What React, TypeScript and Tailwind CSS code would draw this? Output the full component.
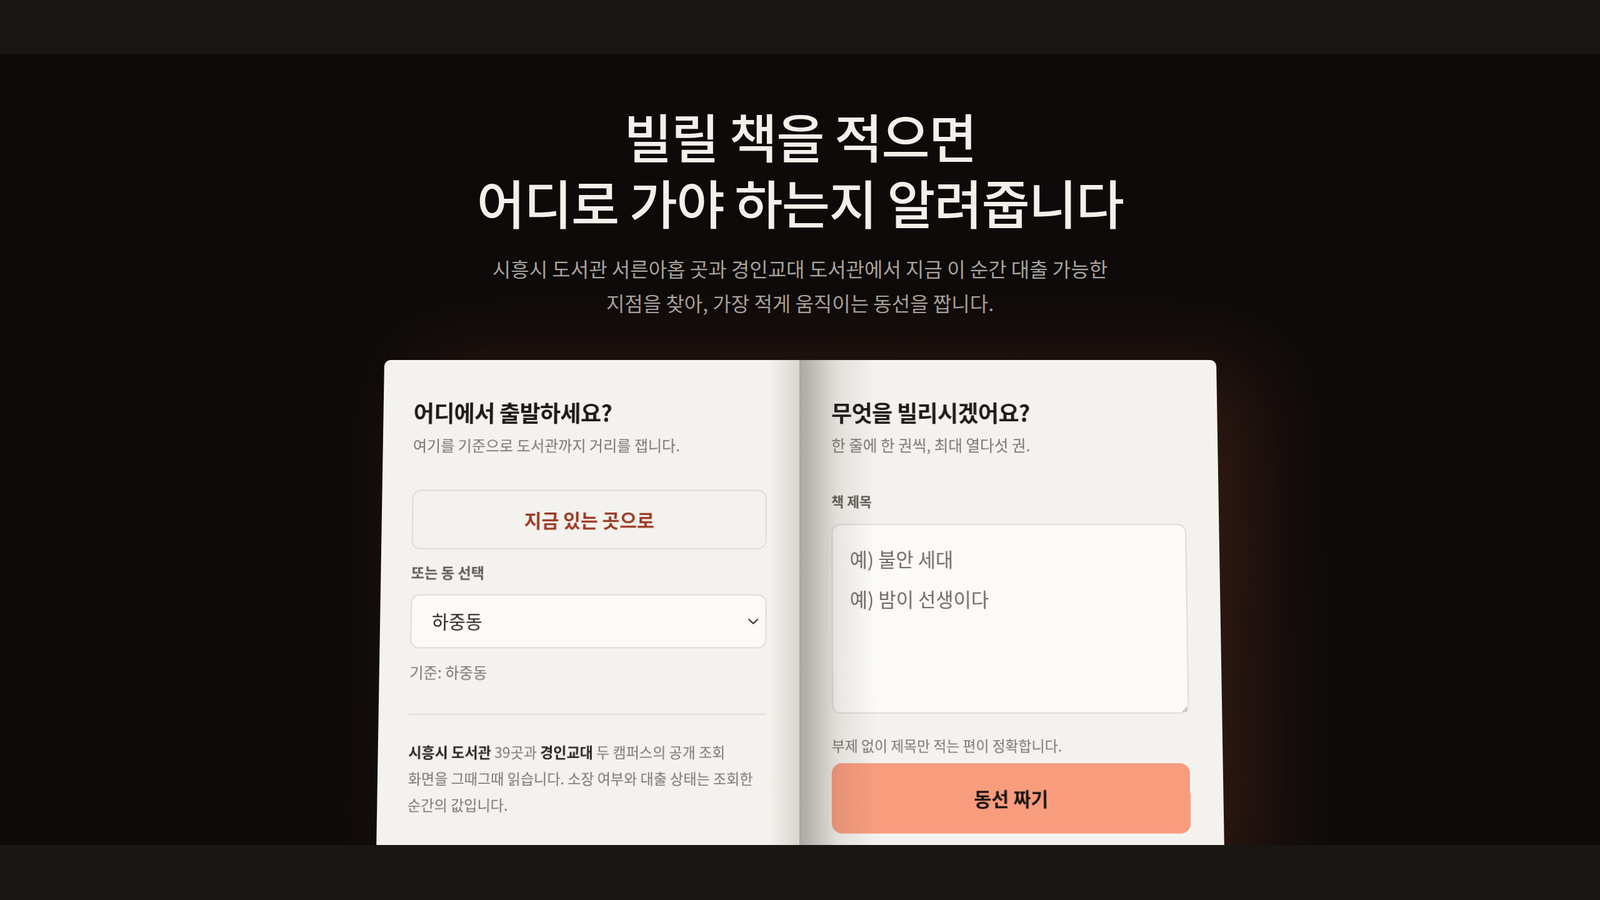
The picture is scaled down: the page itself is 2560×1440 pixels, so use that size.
import { useState } from "react"

const fontStack = '"Noto Sans CJK KR", "Noto Sans", sans-serif'

function ChevronDown() {
  return (
    <svg width="18" height="10" viewBox="0 0 18 10" fill="none" className="pointer-events-none absolute right-[12px] top-1/2 -translate-y-1/2">
      <path d="M2 1.5 L9 8 L16 1.5" stroke="#2a2522" strokeWidth="2" strokeLinecap="round" strokeLinejoin="round" />
    </svg>
  )
}

function LeftPage() {
  const [dong, setDong] = useState("하중동")

  return (
    <div className="relative flex-1 rounded-l-[10px] bg-[#f4f2ee] pl-[48px] pr-[52px] pt-[58px]">
      {/* 책등 쪽 그림자 */}
      <div className="pointer-events-none absolute right-0 top-0 h-full w-[48px] bg-gradient-to-r from-transparent to-[#d9d5cf]" />

      <h2 className="text-[36px] font-bold leading-[50px] tracking-[-0.02em] text-[#1f1a17]">어디에서 출발하세요?</h2>
      <p className="mt-[12px] text-[24px] leading-[32px] text-[#7a7570]">여기를 기준으로 도서관까지 거리를 잽니다.</p>

      <button
        type="button"
        className="mt-[55px] flex h-[94px] w-full items-center justify-center rounded-[14px] border-2 border-[#e0dcd7] bg-[#f4f2ee] text-[30px] font-bold text-[#9b3a24]"
      >
        지금 있는 곳으로
      </button>

      <label className="mt-[21px] block text-[23px] font-bold leading-[30px] text-[#5f5a55]">또는 동 선택</label>
      <div className="relative mt-[20px]">
        <select
          value={dong}
          onChange={e => setDong(e.target.value)}
          className="block h-[85px] w-full appearance-none rounded-[14px] border-2 border-[#e0dcd7] bg-[#fbfaf8] pl-[32px] text-[29px] text-[#2a2522] outline-none"
        >
          <option>하중동</option>
          <option>정왕동</option>
          <option>은행동</option>
          <option>대야동</option>
        </select>
        <ChevronDown />
      </div>
      <p className="mt-[21px] text-[24px] leading-[32px] text-[#7a7570]">기준: {dong}</p>

      <div className="mt-[49px] h-[2px] w-full bg-[#e0dcd7]" />

      <p className="mt-[37px] text-[22.7px] leading-[41px] text-[#7a7570]">
        <b className="font-bold text-[#2a2522]">시흥시 도서관</b> 39곳과 <b className="font-bold text-[#2a2522]">경인교대</b> 두 캠퍼스의 공개 조회
        <br />
        화면을 그때그때 읽습니다. 소장 여부와 대출 상태는 조회한
        <br />
        순간의 값입니다.
      </p>
      <div className="h-[80px]" />
    </div>
  )
}

function RightPage() {
  return (
    <div className="relative flex-1 rounded-r-[10px] bg-[#f4f2ee] pl-[51px] pr-[52px] pt-[58px]">
      <h2 className="text-[36px] font-bold leading-[50px] tracking-[-0.02em] text-[#1f1a17]">무엇을 빌리시겠어요?</h2>
      <p className="mt-[12px] text-[24.5px] leading-[32px] text-[#7a7570]">한 줄에 한 권씩, 최대 열다섯 권.</p>

      <label className="mt-[58px] block text-[21.5px] font-bold leading-[30px] text-[#5f5a55]">책 제목</label>
      <textarea
        placeholder={"예) 불안 세대\n예) 밤이 선생이다"}
        className="mt-[21px] block h-[298px] w-full rounded-[14px] border-2 border-[#e0dcd7] bg-[#fbfaf8] px-[27px] pt-[22px] text-[30.5px] leading-[63px] text-[#2a2522] outline-none placeholder:text-[#6e6964]"
      />
      <p className="mt-[34px] text-[22.5px] leading-[30px] text-[#7a7570]">부제 없이 제목만 적는 편이 정확합니다.</p>

      <button
        type="button"
        className="mt-[13px] flex h-[109px] w-full items-center justify-center rounded-[16px] bg-[#f89c7e] text-[30px] font-bold text-[#1a1411]"
      >
        동선 짜기
      </button>
      <div className="h-[80px]" />

      {/* 책등 쪽 그림자 */}
      <div className="pointer-events-none absolute left-0 top-0 h-full w-[120px] bg-gradient-to-r from-[rgba(70,62,55,0.42)] via-[rgba(70,62,55,0.1)] to-transparent" />
    </div>
  )
}

export default function App() {
  return (
    <div className="flex h-screen flex-col overflow-hidden bg-[#0d0a09]" style={{ fontFamily: fontStack }}>
      <header className="h-[87px] shrink-0 bg-[#1a1613]" />

      <main className="relative flex-1 overflow-hidden bg-[#0d0a09]">
        <div className="pointer-events-none absolute left-[54%] top-[420px] h-[700px] w-[1500px] -translate-x-1/2 rounded-full bg-[radial-gradient(ellipse_at_center,rgba(70,35,25,0.26),transparent_65%)]" />

        <section className="relative flex flex-col items-center pt-[77px]">
          <h1 className="text-center text-[84px] font-medium leading-[106px] tracking-[-0.02em] text-[#f3efe9]">
            빌릴 책을 적으면
            <br />
            어디로 가야 하는지 알려줍니다
          </h1>
          <p className="mt-[26px] text-center text-[32px] leading-[55px] text-[#a8a29c]">
            시흥시 도서관 서른아홉 곳과 경인교대 도서관에서 지금 이 순간 대출 가능한
            <br />
            지점을 찾아, 가장 적게 움직이는 동선을 짭니다.
          </p>
        </section>

        <div className="relative mx-auto mt-[64px] flex w-[1331px] origin-top [transform:perspective(2400px)_rotateX(3.4deg)] rounded-[10px] shadow-[60px_10px_140px_rgba(95,45,30,0.42)]">
          <LeftPage />
          <RightPage />
        </div>
      </main>

      <footer className="h-[88px] shrink-0 bg-[#1a1613]" />
    </div>
  )
}
